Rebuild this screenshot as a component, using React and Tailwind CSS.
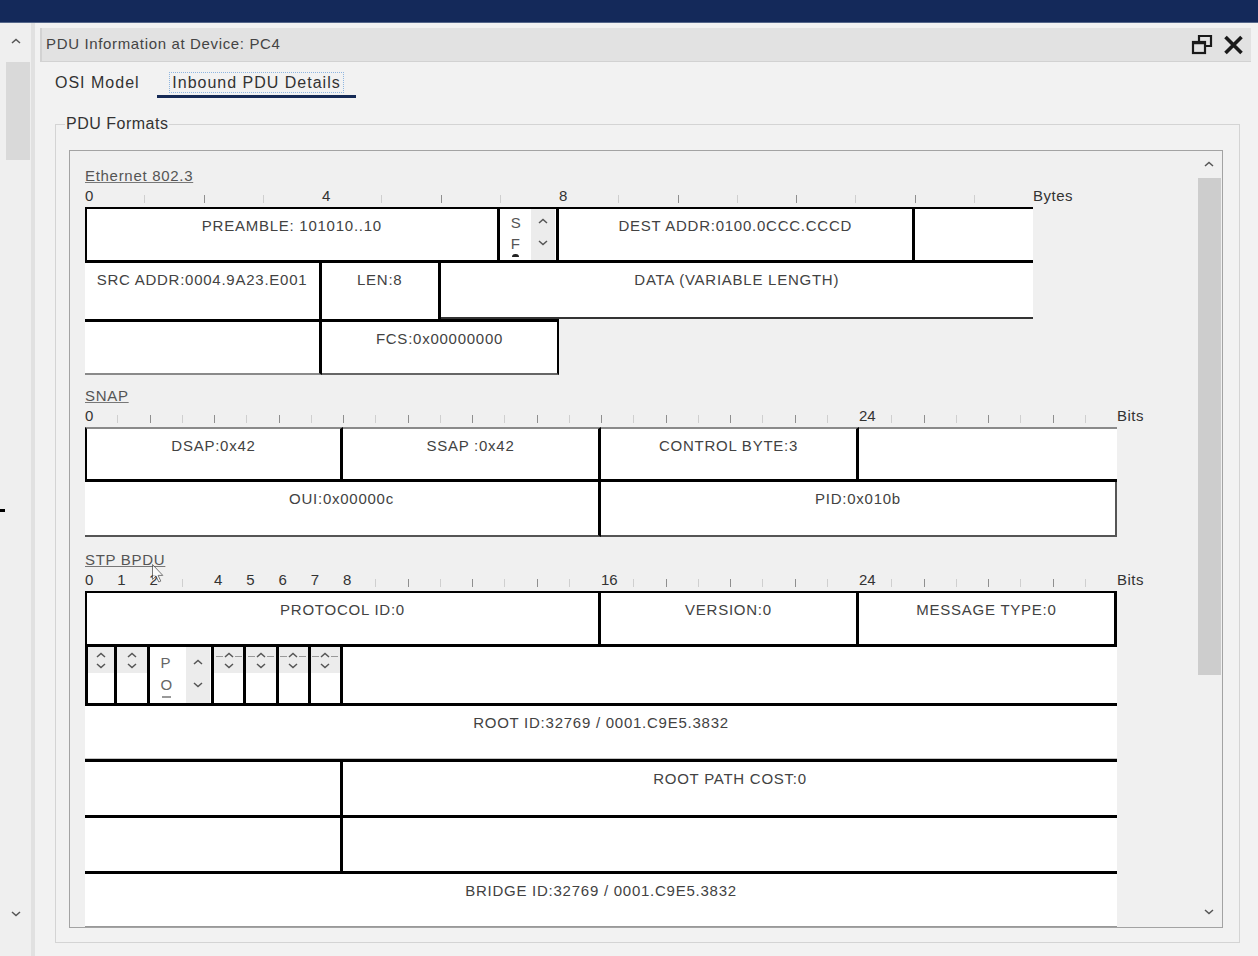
import React from "react";

const Chev = ({ up, className = "" }) => (
  <svg width="10" height="6" viewBox="0 0 10 6" className={className}>
    <path
      d={up ? "M1 5L5 1.5L9 5" : "M1 1L5 4.5L9 1"}
      fill="none"
      stroke="#555"
      strokeWidth="1.5"
    />
  </svg>
);

// up chevron with little dashes either side (as drawn in the flag cells)
const DashChev = () => (
  <svg width="26" height="6" viewBox="0 0 26 6">
    <path d="M0 4.5H7M19 4.5H26" stroke="#999" strokeWidth="1" />
    <path d="M9 5L13 1.5L17 5" fill="none" stroke="#555" strokeWidth="1.5" />
  </svg>
);

function Ruler({ n, grid, width, labels, unit }) {
  return (
    <div className="flex items-end h-[21px] pb-[4px]">
      <div className={`grid ${grid} ${width} h-full`}>
        {Array.from({ length: n }, (_, i) => (
          <div key={i} className="flex items-end h-full">
            {labels[i] !== undefined ? (
              <span className="text-[15px] leading-[15px] text-[#333]">{labels[i]}</span>
            ) : (
              <span className={`w-px h-[8px] ${i % 2 ? "bg-[#cfcfcf]" : "bg-[#8f8f8f]"}`} />
            )}
          </div>
        ))}
      </div>
      <span className="text-[15px] leading-[15px] text-[#333] tracking-[0.5px]">{unit}</span>
    </div>
  );
}

function Box({ className = "", children }) {
  return (
    <div
      className={`bg-white text-center text-[15px] leading-[18px] pt-[8px] text-[#424242] tracking-[0.75px] whitespace-nowrap overflow-hidden ${className}`}
    >
      {children}
    </div>
  );
}

function Label({ children }) {
  return (
    <div className="h-[20px] leading-[20px] text-[15px] text-[#555] tracking-[0.7px] underline decoration-[#777]">
      {children}
    </div>
  );
}

function FlagCell({ className = "", dashed }) {
  return (
    <div className={`bg-white flex flex-col ${className}`}>
      <div className="h-[26px] bg-[#ececec] flex flex-col items-center justify-center gap-[5px]">
        {dashed ? <DashChev /> : <Chev up />}
        <Chev />
      </div>
    </div>
  );
}

function Ethernet() {
  return (
    <div>
      <Label>Ethernet 802.3</Label>
      <Ruler n={16} grid="grid-cols-16" width="w-[948px]" labels={{ 0: "0", 4: "4", 8: "8" }} unit="Bytes" />
      <div className="grid grid-cols-16 auto-rows-[56px] w-[948px]">
        <Box className="col-span-7 border-l-2 border-t-2 border-r-[3px] border-b-[3px] border-black">
          PREAMBLE:  101010..10
        </Box>
        <div className="col-span-1 bg-white border-t-2 border-r-[3px] border-b-[3px] border-black flex overflow-hidden">
          <div className="flex flex-col pl-[11px] pt-[3px] text-[15px] leading-[21px] text-[#555]">
            <span>S</span>
            <span>F</span>
            <span className="ml-[1px] w-[7px] h-[3px] rounded-t-full bg-[#222]" />
          </div>
          <div className="ml-auto mr-[1px] w-[24px] bg-[#ececec] flex flex-col items-center pt-[9px] gap-[16px]">
            <Chev up />
            <Chev />
          </div>
        </div>
        <Box className="col-span-6 border-t-2 border-r-[3px] border-b-[3px] border-black">
          DEST ADDR:0100.0CCC.CCCD
        </Box>
        <Box className="col-span-2 border-t-2 border-b-[3px] border-black" />

        <Box className="col-span-4 border-r-[3px] border-black">SRC ADDR:0004.9A23.E001</Box>
        <Box className="col-span-2 border-r-[3px] border-black">LEN:8</Box>
        <Box className="col-span-10 border-b-2 border-[#333]">DATA (VARIABLE LENGTH)</Box>

        <Box className="col-span-4 border-t-[3px] border-r-[3px] border-b-2 border-black border-b-[#8a8a8a]" />
        <Box className="col-span-4 border-t-[3px] border-r-2 border-b-2 border-black border-b-[#666]">
          FCS:0x00000000
        </Box>
      </div>
    </div>
  );
}

function Snap() {
  return (
    <div className="mt-[11px]">
      <Label>SNAP</Label>
      <Ruler n={32} grid="grid-cols-32" width="w-[1032px]" labels={{ 0: "0", 24: "24" }} unit="Bits" />
      <div className="grid grid-cols-32 auto-rows-[55px] w-[1032px]">
        <Box className="col-span-8 border-l-2 border-t-2 border-r-[3px] border-b-[3px] border-black border-t-[#8a8a8a]">
          DSAP:0x42
        </Box>
        <Box className="col-span-8 border-t-2 border-r-[3px] border-b-[3px] border-black border-t-[#8a8a8a]">
          SSAP :0x42
        </Box>
        <Box className="col-span-8 border-t-2 border-r-[3px] border-b-[3px] border-black border-t-[#8a8a8a]">
          CONTROL BYTE:3
        </Box>
        <Box className="col-span-8 border-t-2 border-b-[3px] border-black border-t-[#8a8a8a]" />

        <Box className="col-span-16 border-r-[3px] border-b-2 border-black border-b-[#555]">OUI:0x00000c</Box>
        <Box className="col-span-16 border-r-2 border-b-2 border-[#555]">PID:0x010b</Box>
      </div>
    </div>
  );
}

function Stp() {
  return (
    <div className="mt-[13px] relative">
      <Label>STP BPDU</Label>
      <svg
        width="12"
        height="19"
        viewBox="0 0 12 19"
        className="absolute left-[67px] top-[14px] opacity-70"
      >
        <path d="M0.5 0.5V15.5L4 12.2L6.8 18L8.8 17.1L6.1 11.4H10.8Z" fill="#fff" stroke="#444" strokeWidth="1" />
      </svg>
      <Ruler
        n={32}
        grid="grid-cols-32"
        width="w-[1032px]"
        labels={{ 0: "0", 1: "1", 2: "2", 4: "4", 5: "5", 6: "6", 7: "7", 8: "8", 16: "16", 24: "24" }}
        unit="Bits"
      />
      <div className="grid grid-cols-32 auto-rows-[56px] w-[1032px]">
        <Box className="col-span-16 border-l-2 border-t-2 border-r-[3px] border-b-[3px] border-black">
          PROTOCOL ID:0
        </Box>
        <Box className="col-span-8 border-t-2 border-r-[3px] border-b-[3px] border-black">VERSION:0</Box>
        <Box className="col-span-8 border-t-2 border-r-[3px] border-b-[3px] border-black">MESSAGE TYPE:0</Box>

        <FlagCell className="col-span-1 border-l-[3px] border-r-[3px] border-black" />
        <FlagCell className="col-span-1 border-r-[3px] border-black" />
        <div className="col-span-2 bg-white border-r-[3px] border-black flex overflow-hidden">
          <div className="flex flex-col pl-[11px] pt-[5px] text-[15px] leading-[22px] text-[#666]">
            <span>P</span>
            <span>O</span>
            <span className="ml-[1px] w-[9px] h-[2px] bg-[#999]" />
          </div>
          <div className="ml-auto mr-[1px] w-[24px] bg-[#ececec] flex flex-col items-center pt-[12px] gap-[17px]">
            <Chev up />
            <Chev />
          </div>
        </div>
        <FlagCell className="col-span-1 border-r-[3px] border-black" dashed />
        <FlagCell className="col-span-1 border-r-[3px] border-black" dashed />
        <FlagCell className="col-span-1 border-r-[3px] border-black" dashed />
        <FlagCell className="col-span-1 border-r-[3px] border-black" dashed />
        <Box className="col-span-24" />

        <Box className="col-span-32 border-t-[3px] border-b border-black border-b-[#c4c4c4]">
          ROOT ID:32769 / 0001.C9E5.3832
        </Box>

        <Box className="col-span-8 border-t-[3px] border-r-[3px] border-black" />
        <Box className="col-span-24 border-t-[3px] border-black">ROOT PATH COST:0</Box>

        <Box className="col-span-8 border-t-[3px] border-r-[3px] border-black" />
        <Box className="col-span-24 border-t-[3px] border-black" />

        <Box className="col-span-32 border-t-[3px] border-b border-black border-b-[#999] bg-[#f8f8f8]">
          BRIDGE ID:32769 / 0001.C9E5.3832
        </Box>
      </div>
    </div>
  );
}

function LeftStrip() {
  return (
    <div className="w-[35px] shrink-0 relative flex flex-col bg-[#efefef] border-r-[4px] border-[#e1e1e1]">
      <div className="h-[10px] mt-[15px] flex justify-center">
        <Chev up />
      </div>
      <div className="ml-[6px] mt-[14px] w-[24px] h-[98px] bg-[#d9d9d9]" />
      <div className="flex-1" />
      <div className="h-[10px] mb-[35px] flex justify-center">
        <Chev />
      </div>
      <div className="absolute left-0 top-[486px] w-[5px] h-[3px] bg-black" />
    </div>
  );
}

function TitleBar() {
  return (
    <div className="h-[34px] shrink-0 bg-[#e2e2e2] border-l-2 border-b border-[#d2d2d2] flex items-center pl-[4px] pr-[6px]">
      <span className="text-[15px] text-[#444] tracking-[0.65px]">PDU Information at Device: PC4</span>
      <div className="ml-auto flex items-center gap-[9px]">
        <svg width="22" height="21" viewBox="0 0 22 21">
          <path d="M8 7V2H20V12H14" fill="none" stroke="#1a1a1a" strokeWidth="2.2" />
          <rect x="2" y="8" width="12" height="11" fill="none" stroke="#1a1a1a" strokeWidth="2.2" />
          <path d="M2 9H14" stroke="#1a1a1a" strokeWidth="2.5" />
        </svg>
        <svg width="23" height="20" viewBox="0 0 23 20">
          <path d="M3.5 2L19.5 18M19.5 2L3.5 18" stroke="#1a1a1a" strokeWidth="3.6" />
        </svg>
      </div>
    </div>
  );
}

function Tabs() {
  return (
    <div className="h-[38px] shrink-0 flex items-start pt-[10px] pl-[15px]">
      <div className="w-[102px] h-[22px] leading-[22px] text-[16px] text-[#333] tracking-[1px]">OSI Model</div>
      <div className="w-[199px] h-[26px] flex justify-center border-b-[3px] border-[#152a55]">
        <span className="h-[21px] leading-[19px] px-[2px] border border-dotted border-[#8fb6e0] text-[16px] text-[#333] tracking-[1px]">
          Inbound PDU Details
        </span>
      </div>
    </div>
  );
}

function Panel() {
  return (
    <div className="ml-[13px] mr-[16px] mt-[17px] h-[778px] border border-[#a3a3a3] bg-[#f0f0f0] flex">
      <div className="flex-1 min-w-0 overflow-hidden pl-[15px] pt-[15px]">
        <Ethernet />
        <Snap />
        <Stp />
      </div>
      <div className="w-[26px] shrink-0 flex flex-col items-center bg-[#f0f0f0]">
        <div className="h-[10px] mt-[8px] flex items-center">
          <Chev up />
        </div>
        <div className="mt-[9px] w-[23px] h-[497px] bg-[#cdcdcd]" />
        <div className="flex-1" />
        <div className="h-[10px] mb-[10px] flex items-center">
          <Chev />
        </div>
      </div>
    </div>
  );
}

export default function App() {
  return (
    <div className="w-[1258px] h-[956px] overflow-hidden bg-[#f0f0f0] flex flex-col font-['Liberation_Sans',Arial,sans-serif]">
      <div className="h-[23px] shrink-0 bg-[#14295a] border-b border-[#55678a]" />
      <div className="flex flex-1 min-h-0">
        <LeftStrip />
        <div className="flex-1 flex flex-col pl-[5px] pr-[7px] pt-[5px] bg-[#f2f2f2]">
          <TitleBar />
          <Tabs />
          <fieldset className="ml-[15px] mr-[11px] mt-[15px] h-[828px] min-w-0 border border-[#d4d4d4]">
            <legend className="ml-[9px] px-[1px] text-[16px] leading-[18px] text-[#333] tracking-[0.5px]">PDU Formats</legend>
            <Panel />
          </fieldset>
        </div>
      </div>
    </div>
  );
}
